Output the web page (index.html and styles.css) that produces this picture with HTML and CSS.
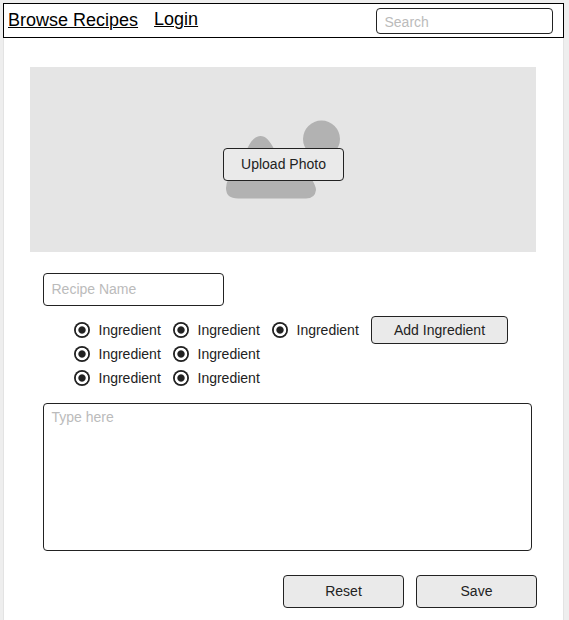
FILE: index.html
```html
<!DOCTYPE html>
<html lang="en">
<head>
<meta charset="utf-8">
<title>Add Recipe</title>
<link rel="stylesheet" href="styles.css">
</head>
<body>
<div class="page">
  <nav class="nav">
    <a class="link" href="#">Browse Recipes</a>
    <a class="link link-login" href="#">Login</a>
    <input class="field search" type="text" placeholder="Search">
  </nav>
  <main class="content">
    <section class="photo">
      <svg class="photo-art" viewBox="0 0 120 84" width="120" height="84" aria-hidden="true">
        <circle cx="98.500" cy="22" r="18.500"/>
        <path d="M24 32C32 14.500 43 14.500 51 32L88 61Q93 69 93 73Q92 81.500 83 81.500H15Q3 81.500 3 71Q3 66 6 61Z"/>
      </svg>
      <button class="button upload" type="button">Upload Photo</button>
    </section>
    <form class="form">
      <input class="field name" type="text" placeholder="Recipe Name">
      <div class="ingredients">
        <div class="column">
          <span class="item"><i class="radio"></i>Ingredient</span>
          <span class="item"><i class="radio"></i>Ingredient</span>
          <span class="item"><i class="radio"></i>Ingredient</span>
        </div>
        <div class="column">
          <span class="item"><i class="radio"></i>Ingredient</span>
          <span class="item"><i class="radio"></i>Ingredient</span>
          <span class="item"><i class="radio"></i>Ingredient</span>
        </div>
        <div class="column">
          <span class="item"><i class="radio"></i>Ingredient</span>
        </div>
        <button class="button add" type="button">Add Ingredient</button>
      </div>
      <textarea class="field notes" placeholder="Type here"></textarea>
      <div class="actions">
        <button class="button" type="button">Reset</button>
        <button class="button" type="button">Save</button>
      </div>
    </form>
  </main>
</div>
</body>
</html>
```
FILE: styles.css
```css
* { box-sizing: border-box; }
body {
  margin: 0;
  padding: 3px 5px 0 3px;
  height: 620px;
  overflow: hidden;
  background: #eee;
  color: #222;
  font: 14px/16px "Liberation Sans", Arial, sans-serif;
}
.page {
  width: 561px;
  height: 617px;
  background: #fff;
  border: solid #e3e3e3;
  border-width: 0 1px;
}
.nav {
  display: flex;
  align-items: flex-start;
  height: 35px;
  margin: 0 -1px;
  padding: 4px 10px 0 4px;
  border: 1px solid #000;
}
.link {
  margin-top: 2px;
  color: #000;
  font-size: 18px;
  line-height: 20px;
  text-underline-offset: 1px;
  text-decoration-thickness: 1px;
}
.link-login { margin: 1px 0 0 16px; }
.field {
  display: block;
  margin: 0;
  padding: 0 7.5px 2px;
  border: 1px solid #222;
  border-radius: 4px;
  background: #fff;
  color: #222;
  font: inherit;
  outline: 0;
  resize: none;
}
.field::placeholder { color: #bbb; opacity: 1; }
.search { width: 177px; height: 26px; margin-left: auto; padding: 2px 7.5px 0; }
.content { padding: 29px 26px 0; }
.photo {
  position: relative;
  display: flex;
  width: 506px;
  height: 185px;
  padding: 81px 0 0 193px;
  background: #e5e5e5;
}
.photo-art {
  position: absolute;
  left: 193px;
  top: 50px;
  fill: #b2b2b2;
}
.button {
  width: 121px;
  height: 33px;
  margin: 0;
  padding: 0 0 2px;
  border: 1px solid #222;
  border-radius: 4px;
  background: #eaeaea;
  color: #222;
  font: inherit;
}
.upload { position: relative; }
.form { padding: 21px 0 0 13px; }
.name { width: 181px; height: 33px; }
.ingredients {
  display: flex;
  align-items: flex-start;
  height: 97px;
  padding: 10px 0 0 30.5px;
}
.column { width: 99px; padding-top: 2px; }
.item { display: flex; align-items: center; height: 24px; }
.radio {
  flex: none;
  width: 16px;
  height: 16px;
  margin-right: 9px;
  border-radius: 50%;
  background: radial-gradient(circle, #222 3.2px, #fff 4.1px, #fff 5.8px, #222 6.6px);
}
.add { width: 137px; height: 28px; margin-left: .5px; padding: 0; }
.notes { width: 489px; height: 148px; padding: 5px 7.5px; }
.actions { display: flex; gap: 12px; padding: 24px 0 0 240px; }
```
